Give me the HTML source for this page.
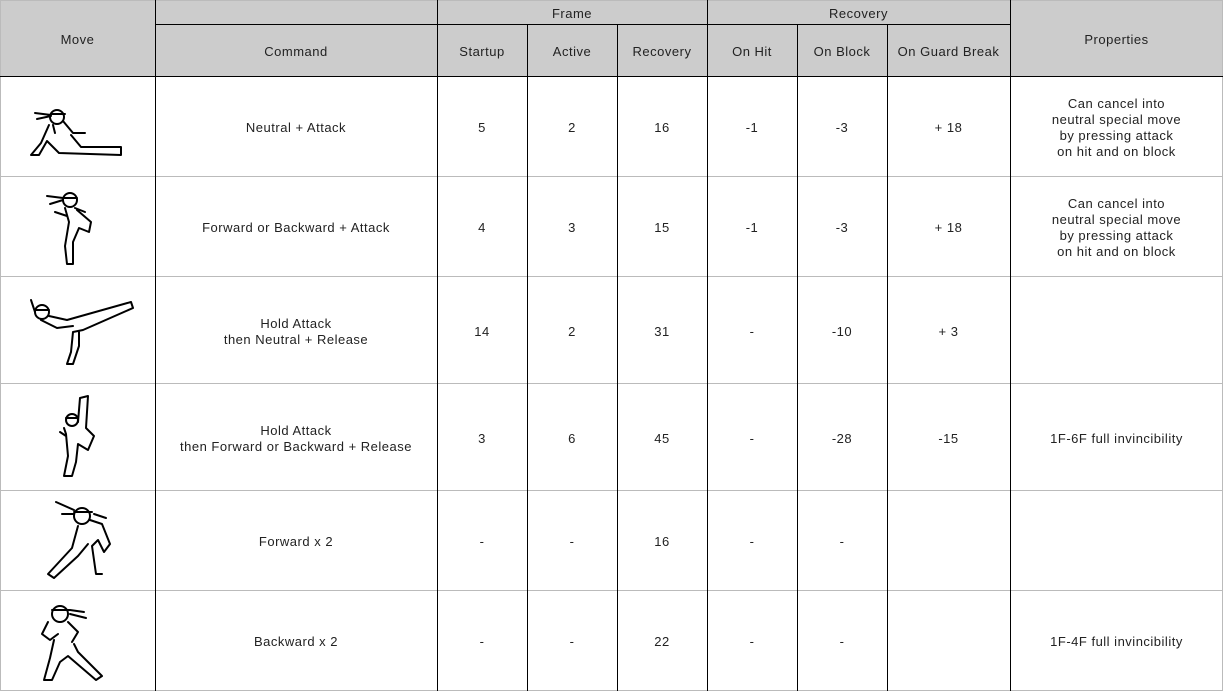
<!DOCTYPE html>
<html><head><meta charset="utf-8"><style>
*{margin:0;padding:0;box-sizing:border-box}
body{width:1223px;height:691px;background:#fff;position:relative;overflow:hidden;font-family:"Liberation Sans",sans-serif;font-size:13px;color:#222;letter-spacing:0.5px}
.hd{position:absolute;top:0;left:0;width:1223px;height:76px;background:#ccc}
.v,.h{position:absolute;background:#000}
.v{width:1px}.h{height:1px}
.g{background:#bbb}
.c{position:absolute;display:flex;align-items:center;justify-content:center;text-align:center;line-height:16px;padding-top:4px}
svg{position:absolute}
svg *{fill:none;stroke:#000;stroke-width:2;stroke-linejoin:round;stroke-linecap:round}
</style></head><body>
<div class="hd"></div>
<div class="h g" style="left:0;top:0;width:1223px"></div>
<div class="h g" style="left:0;top:690px;width:1223px"></div>
<div class="v g" style="left:0;top:0;height:691px"></div>
<div class="v g" style="left:1222px;top:0;height:691px"></div>
<div class="h" style="left:155px;top:24px;width:855px"></div>
<div class="h" style="left:0;top:76px;width:1223px"></div>
<div class="h g" style="left:0;top:176px;width:1223px"></div>
<div class="h g" style="left:0;top:276px;width:1223px"></div>
<div class="h g" style="left:0;top:383px;width:1223px"></div>
<div class="h g" style="left:0;top:490px;width:1223px"></div>
<div class="h g" style="left:0;top:590px;width:1223px"></div>
<div class="v" style="left:155px;top:0;height:691px"></div>
<div class="v" style="left:437px;top:0;height:691px"></div>
<div class="v" style="left:527px;top:24px;height:667px"></div>
<div class="v" style="left:617px;top:24px;height:667px"></div>
<div class="v" style="left:707px;top:0;height:691px"></div>
<div class="v" style="left:797px;top:24px;height:667px"></div>
<div class="v" style="left:887px;top:24px;height:667px"></div>
<div class="v" style="left:1010px;top:0;height:691px"></div>

<div class="c" style="left:0;top:0;width:155px;height:76px">Move</div>
<div class="c" style="left:437px;top:0;width:270px;height:24px">Frame</div>
<div class="c" style="left:707px;top:0;width:303px;height:24px">Recovery</div>
<div class="c" style="left:1010px;top:0;width:213px;height:76px">Properties</div>
<div class="c" style="left:155px;top:24px;width:282px;height:52px">Command</div>
<div class="c" style="left:437px;top:24px;width:90px;height:52px">Startup</div>
<div class="c" style="left:527px;top:24px;width:90px;height:52px">Active</div>
<div class="c" style="left:617px;top:24px;width:90px;height:52px">Recovery</div>
<div class="c" style="left:707px;top:24px;width:90px;height:52px">On Hit</div>
<div class="c" style="left:797px;top:24px;width:90px;height:52px">On Block</div>
<div class="c" style="left:887px;top:24px;width:123px;height:52px">On Guard Break</div>

<div class="c" style="left:155px;top:76px;width:282px;height:100px">Neutral + Attack</div>
<div class="c" style="left:437px;top:76px;width:90px;height:100px">5</div>
<div class="c" style="left:527px;top:76px;width:90px;height:100px">2</div>
<div class="c" style="left:617px;top:76px;width:90px;height:100px">16</div>
<div class="c" style="left:707px;top:76px;width:90px;height:100px">-1</div>
<div class="c" style="left:797px;top:76px;width:90px;height:100px">-3</div>
<div class="c" style="left:887px;top:76px;width:123px;height:100px">+ 18</div>
<div class="c" style="left:1010px;top:76px;width:213px;height:100px">Can cancel into<br>neutral special move<br>by pressing attack<br>on hit and on block</div>

<div class="c" style="left:155px;top:176px;width:282px;height:100px">Forward or Backward + Attack</div>
<div class="c" style="left:437px;top:176px;width:90px;height:100px">4</div>
<div class="c" style="left:527px;top:176px;width:90px;height:100px">3</div>
<div class="c" style="left:617px;top:176px;width:90px;height:100px">15</div>
<div class="c" style="left:707px;top:176px;width:90px;height:100px">-1</div>
<div class="c" style="left:797px;top:176px;width:90px;height:100px">-3</div>
<div class="c" style="left:887px;top:176px;width:123px;height:100px">+ 18</div>
<div class="c" style="left:1010px;top:176px;width:213px;height:100px">Can cancel into<br>neutral special move<br>by pressing attack<br>on hit and on block</div>

<div class="c" style="left:155px;top:276px;width:282px;height:107px">Hold Attack<br>then Neutral + Release</div>
<div class="c" style="left:437px;top:276px;width:90px;height:107px">14</div>
<div class="c" style="left:527px;top:276px;width:90px;height:107px">2</div>
<div class="c" style="left:617px;top:276px;width:90px;height:107px">31</div>
<div class="c" style="left:707px;top:276px;width:90px;height:107px">-</div>
<div class="c" style="left:797px;top:276px;width:90px;height:107px">-10</div>
<div class="c" style="left:887px;top:276px;width:123px;height:107px">+ 3</div>

<div class="c" style="left:155px;top:383px;width:282px;height:107px">Hold Attack<br>then Forward or Backward + Release</div>
<div class="c" style="left:437px;top:383px;width:90px;height:107px">3</div>
<div class="c" style="left:527px;top:383px;width:90px;height:107px">6</div>
<div class="c" style="left:617px;top:383px;width:90px;height:107px">45</div>
<div class="c" style="left:707px;top:383px;width:90px;height:107px">-</div>
<div class="c" style="left:797px;top:383px;width:90px;height:107px">-28</div>
<div class="c" style="left:887px;top:383px;width:123px;height:107px">-15</div>
<div class="c" style="left:1010px;top:383px;width:213px;height:107px">1F-6F full invincibility</div>

<div class="c" style="left:155px;top:490px;width:282px;height:100px">Forward x 2</div>
<div class="c" style="left:437px;top:490px;width:90px;height:100px">-</div>
<div class="c" style="left:527px;top:490px;width:90px;height:100px">-</div>
<div class="c" style="left:617px;top:490px;width:90px;height:100px">16</div>
<div class="c" style="left:707px;top:490px;width:90px;height:100px">-</div>
<div class="c" style="left:797px;top:490px;width:90px;height:100px">-</div>

<div class="c" style="left:155px;top:590px;width:282px;height:100px">Backward x 2</div>
<div class="c" style="left:437px;top:590px;width:90px;height:100px">-</div>
<div class="c" style="left:527px;top:590px;width:90px;height:100px">-</div>
<div class="c" style="left:617px;top:590px;width:90px;height:100px">22</div>
<div class="c" style="left:707px;top:590px;width:90px;height:100px">-</div>
<div class="c" style="left:797px;top:590px;width:90px;height:100px">-</div>
<div class="c" style="left:1010px;top:590px;width:213px;height:100px">1F-4F full invincibility</div>

<svg style="left:25px;top:105px" width="105" height="55"><circle cx="32" cy="12" r="7"/><path d="M26 9H40M10 8L26 10M12 14L26 11"/><path d="M38 16L48 28 60 28 M24 20L16 38 6 50 14 50 22 36 34 48 96 50 96 42 56 42 46 30M28 20L30 28"/></svg>
<svg style="left:45px;top:188px" width="60" height="80"><circle cx="25" cy="12" r="7"/><path d="M18 10H32M2 8L18 10M5 16L18 12"/><path d="M20 20L24 34 20 58 22 76 28 76 28 54 34 40 44 44 46 34 32 22M30 20L40 24M10 24L22 28"/></svg>
<svg style="left:27px;top:292px" width="110" height="75"><circle cx="15" cy="20" r="7"/><path d="M8 18H22M4 8L8 20"/><path d="M22 24L40 28 104 10 106 16 56 38 46 40 44 60 40 72 46 72 52 54 52 40M14 28L30 36 46 34"/></svg>
<svg style="left:50px;top:392px" width="50" height="88"><circle cx="22" cy="28" r="6"/><path d="M16 26H28"/><path d="M28 30L30 6 38 4 36 36 44 44 38 58 28 52 26 70 22 84 14 84 18 64 16 42 14 36M16 44L10 40"/></svg>
<svg style="left:42px;top:500px" width="75" height="80"><circle cx="40" cy="16" r="8"/><path d="M32 12H50M14 2L32 10M20 14L32 14"/><path d="M48 20L60 24 68 44 62 52 56 40 50 46 54 74 60 74 M36 26L30 48 6 74 12 78 36 56 46 44M52 14L64 18"/></svg>
<svg style="left:38px;top:600px" width="70" height="85"><circle cx="22" cy="14" r="8"/><path d="M14 10H32M32 10L46 12M32 14L48 18"/><path d="M10 22L4 34 12 40 20 34 M30 22L40 32 34 42 M16 40L12 58 6 80 14 80 22 62 30 56 58 80 64 76 40 52 36 44"/></svg>
</body></html>
